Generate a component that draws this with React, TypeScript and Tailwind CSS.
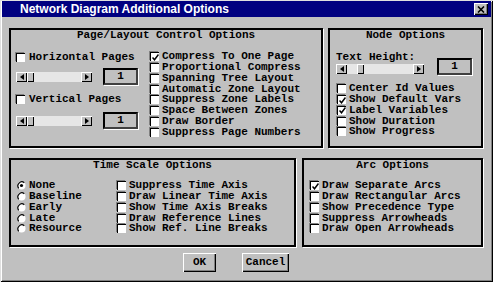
import type { ReactNode } from 'react';

const MONO = "font-['Liberation_Mono',monospace] font-bold text-[11px] leading-[11px] text-black whitespace-pre";

function Check({ on = false }: { on?: boolean }) {
  return (
    <span className="flex h-[9px] w-[9px] shrink-0 items-center justify-center border-l border-t border-black bg-white shadow-[-1px_-1px_0_#808080]">
      {on && (
        <svg width="7" height="7" viewBox="0 0 7 7">
          <path d="M0.5 3.5 L2.5 5.8 L6.5 0.5" fill="none" stroke="#000" strokeWidth="1.5" />
        </svg>
      )}
    </span>
  );
}

function Radio({ on = false }: { on?: boolean }) {
  return (
    <svg width="9" height="9" viewBox="0 0 9 9" className="shrink-0">
      <circle cx="4.5" cy="4.5" r="4" fill="#fff" />
      <path d="M7.3 1.7 A4 4 0 0 0 1.7 7.3" fill="none" stroke="#000" strokeWidth="1.2" />
      {on && <circle cx="4.5" cy="4.5" r="1.6" fill="#000" />}
    </svg>
  );
}

function Row({ children, label }: { children: ReactNode; label: string }) {
  return (
    <div className="flex h-[10.75px] items-center gap-[3px]">
      {children}
      <span className={MONO}>{label}</span>
    </div>
  );
}

function Arrow({ dir }: { dir: 'left' | 'right' }) {
  return (
    <span className="flex h-full w-[11px] shrink-0 items-center justify-center bg-[#c0c0c0] shadow-[inset_1px_1px_#fff,inset_-1px_-1px_#000]">
      <svg width="4" height="6" viewBox="0 0 4 6">
        <path d={dir === 'left' ? 'M4 0 L0 3 L4 6 Z' : 'M0 0 L4 3 L0 6 Z'} fill="#000" />
      </svg>
    </span>
  );
}

function Scroll({ width, thumb }: { width: string; thumb: string }) {
  return (
    <div className={`flex h-[10px] shrink-0 ${width}`}>
      <Arrow dir="left" />
      <div className="flex flex-1 bg-[#e6e6e6]">
        <span className={`h-full w-[7px] bg-[#c0c0c0] shadow-[inset_1px_1px_#fff,inset_-1px_-1px_#000] ${thumb}`} />
      </div>
      <Arrow dir="right" />
    </div>
  );
}

function NumBox({ className = '' }: { className?: string }) {
  return (
    <div
      className={`flex h-[17px] w-[35px] shrink-0 items-center justify-center border-2 border-t-black border-l-black border-r-[#404040] border-b-[#404040] shadow-[1px_1px_0_#fff] ${className}`}
    >
      <span className={MONO}>1</span>
    </div>
  );
}

function Frame({ title, className, children }: { title: string; className: string; children: ReactNode }) {
  return (
    <div className={`flex flex-col border-2 border-black shadow-[1px_1px_0_#fff] ${className}`}>
      <div className={`h-[11px] text-center ${MONO}`}>{title}</div>
      {children}
    </div>
  );
}

function Button({ label, width }: { label: string; width: string }) {
  return (
    <div
      className={`flex h-[19px] items-center justify-center bg-[#c0c0c0] shadow-[inset_1px_1px_#fff,inset_-1px_-1px_#000,inset_-2px_-2px_#808080] ${width}`}
    >
      <span className={MONO}>{label}</span>
    </div>
  );
}

export default function App() {
  return (
    <div className="flex h-[282px] w-[493px] flex-col bg-[#c0c0c0] px-[2px] pt-[1px] shadow-[inset_1px_1px_#dfdfdf,inset_-1px_-1px_#000,inset_2px_2px_#fff,inset_-2px_-2px_#808080]">
      <div className="flex h-[16px] items-center justify-between bg-[#000080] pl-[18px] pr-[3px]">
        <span className="font-['Liberation_Sans',Arial,sans-serif] text-[12px] font-bold leading-[16px] text-white">
          Network Diagram Additional Options
        </span>
        <span className="flex h-[12px] w-[14px] items-center justify-center bg-[#c0c0c0] shadow-[inset_1px_1px_#fff,inset_-1px_-1px_#000,inset_-2px_-2px_#808080]">
          <svg width="8" height="7" viewBox="0 0 8 7">
            <path d="M1 0.5 L7 6.5 M7 0.5 L1 6.5" stroke="#000" strokeWidth="1.6" />
          </svg>
        </span>
      </div>

      <div className="flex flex-col pl-[7px] pt-[11px]">
        <div className="flex gap-[5px]">
          <Frame title="Page/Layout Control Options" className="h-[120px] w-[314px]">
            <div className="mt-[10.5px] flex pl-[5px]">
              <div className="flex w-[134px] flex-col">
                <div className="flex h-[11px] items-center gap-[4px]">
                  <Check />
                  <span className={MONO}>Horizontal Pages</span>
                </div>
                <div className="mt-[5.5px] flex items-center gap-[11px]">
                  <Scroll width="w-[76px]" thumb="ml-0" />
                  <NumBox />
                </div>
                <div className="mt-[9px] flex h-[11px] items-center gap-[4px]">
                  <Check />
                  <span className={MONO}>Vertical Pages</span>
                </div>
                <div className="mt-[7px] flex items-center gap-[11px]">
                  <Scroll width="w-[76px]" thumb="ml-0" />
                  <NumBox />
                </div>
              </div>
              <div className="flex flex-col">
                <Row label="Compress To One Page"><Check on /></Row>
                <Row label="Proportional Compress"><Check /></Row>
                <Row label="Spanning Tree Layout"><Check /></Row>
                <Row label="Automatic Zone Layout"><Check /></Row>
                <Row label="Suppress Zone Labels"><Check /></Row>
                <Row label="Space Between Zones"><Check /></Row>
                <Row label="Draw Border"><Check /></Row>
                <Row label="Suppress Page Numbers"><Check /></Row>
              </div>
            </div>
          </Frame>

          <Frame title="Node Options" className="h-[120px] w-[155px]">
            <div className="mt-[10.5px] flex pl-[6px]">
              <div className="flex w-[88px] flex-col">
                <div className={`h-[11px] ${MONO}`}>Text Height:</div>
                <div className="mt-[1.5px]">
                  <Scroll width="w-[88px]" thumb="ml-[10px]" />
                </div>
              </div>
              <NumBox className="ml-[13px] mt-[6.5px]" />
            </div>
            <div className="mt-[8.5px] flex flex-col pl-[7px]">
              <Row label="Center Id Values"><Check /></Row>
              <Row label="Show Default Vars"><Check on /></Row>
              <Row label="Label Variables"><Check on /></Row>
              <Row label="Show Duration"><Check /></Row>
              <Row label="Show Progress"><Check /></Row>
            </div>
          </Frame>
        </div>

        <div className="mt-[10px] flex gap-[6px]">
          <Frame title="Time Scale Options" className="h-[89px] w-[287px]">
            <div className="mt-[9.5px] flex pl-[6px]">
              <div className="flex w-[100px] flex-col">
                <Row label="None"><Radio on /></Row>
                <Row label="Baseline"><Radio /></Row>
                <Row label="Early"><Radio /></Row>
                <Row label="Late"><Radio /></Row>
                <Row label="Resource"><Radio /></Row>
              </div>
              <div className="flex flex-col">
                <Row label="Suppress Time Axis"><Check /></Row>
                <Row label="Draw Linear Time Axis"><Check /></Row>
                <Row label="Show Time Axis Breaks"><Check /></Row>
                <Row label="Draw Reference Lines"><Check /></Row>
                <Row label="Show Ref. Line Breaks"><Check /></Row>
              </div>
            </div>
          </Frame>

          <Frame title="Arc Options" className="h-[89px] w-[181px]">
            <div className="mt-[9.5px] flex flex-col pl-[6px]">
              <Row label="Draw Separate Arcs"><Check on /></Row>
              <Row label="Draw Rectangular Arcs"><Check /></Row>
              <Row label="Show Precedence Type"><Check /></Row>
              <Row label="Suppress Arrowheads"><Check /></Row>
              <Row label="Draw Open Arrowheads"><Check /></Row>
            </div>
          </Frame>
        </div>

        <div className="mt-[6px] flex gap-[26px] pl-[174px]">
          <Button label="OK" width="w-[33px]" />
          <Button label="Cancel" width="w-[47px]" />
        </div>
      </div>
    </div>
  );
}
